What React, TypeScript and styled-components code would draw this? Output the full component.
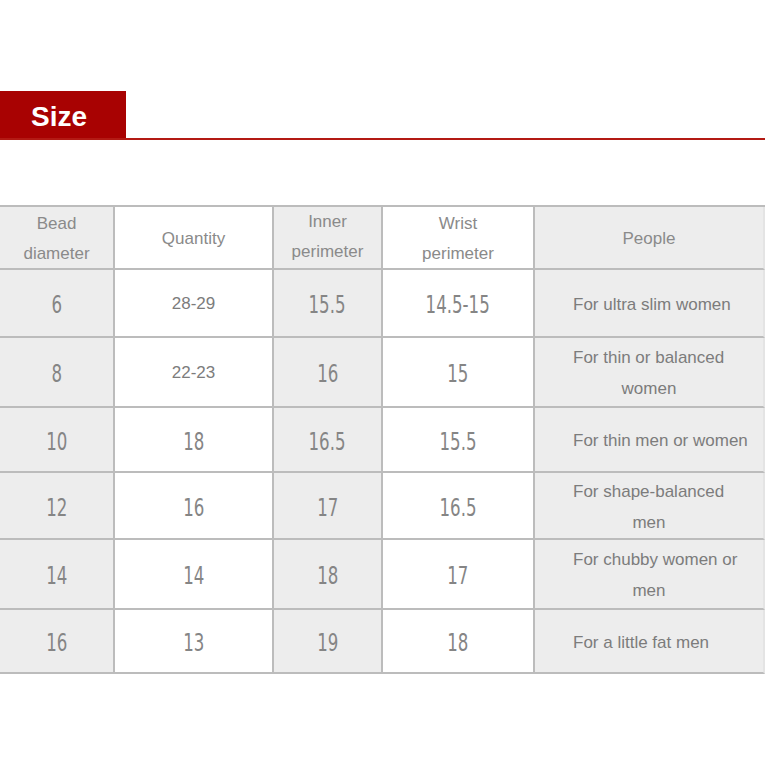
import React from "react";
import styled, { createGlobalStyle } from "styled-components";

const Global = createGlobalStyle`
  html, body { margin: 0; padding: 0; background: #ffffff; }
  body { font-family: "Liberation Sans", Arial, sans-serif; }
`;

const Page = styled.div`
  width: 765px;
  height: 765px;
  overflow: hidden;
  background: #fff;
  padding-top: 91px;
  box-sizing: border-box;
`;

const TitleBar = styled.div`
  display: flex;
  align-items: stretch;
  height: 47px;
  border-bottom: 2px solid #b31a14;
`;

const TitleTab = styled.div`
  width: 126px;
  background: #a80202;
  color: #fff;
  font-family: "Liberation Sans", Arial, sans-serif;
  font-weight: 700;
  font-size: 28px;
  display: flex;
  align-items: center;
  padding-left: 31px;
  box-sizing: border-box;
  padding-top: 5px;
`;

const Table = styled.div`
  margin-top: 65px;
  display: grid;
  grid-template-columns: 115px 159px 109px 152px 230px;
  border-top: 2px solid #bcbcbc;
`;

const Cell = styled.div<{ $gray: boolean; $h: number; $last?: boolean }>`
  height: ${(p) => p.$h}px;
  box-sizing: border-box;
  padding-top: 2px;
  background: ${(p) => (p.$gray ? "#ededed" : "#ffffff")};
  border-bottom: 2px solid #bcbcbc;
  border-right: ${(p) => (p.$last ? "2px solid #e4e4e4" : "2px solid #bcbcbc")};
  display: flex;
  flex-direction: column;
  align-items: center;
  justify-content: center;
  text-align: center;
`;

const HeadText = styled.div<{ $shift?: number }>`
  font-family: "Liberation Sans", Arial, sans-serif;
  font-size: 17px;
  line-height: 30px;
  color: #8a8a8a;
  margin-top: ${(p) => p.$shift ?? 0}px;
`;

const Num = styled.div`
  font-family: "DejaVu Sans Condensed", "DejaVu Sans", sans-serif;
  font-weight: 300;
  font-size: 24px;
  color: #858585;
  transform: translateY(1px) scaleX(0.77);
`;

const Plain = styled.div`
  font-family: "Liberation Sans", Arial, sans-serif;
  font-size: 17px;
  color: #7c7c7c;
`;

const People = styled.div`
  align-self: stretch;
  font-family: "Liberation Sans", Arial, sans-serif;
  font-size: 17px;
  line-height: 31px;
  color: #7c7c7c;
  display: flex;
  flex-direction: column;
  padding-left: 38px;
`;

const PeopleLine = styled.div<{ $center?: boolean }>`
  text-align: ${(p) => (p.$center ? "center" : "left")};
  margin-left: ${(p) => (p.$center ? "-38px" : "0")};
  white-space: nowrap;
`;

type Row = {
  h: number;
  bead: string;
  qty: string;
  qtyPlain?: boolean;
  inner: string;
  wrist: string;
  people: string[];
};

const rows: Row[] = [
  { h: 68, bead: "6", qty: "28-29", qtyPlain: true, inner: "15.5", wrist: "14.5-15", people: ["For ultra slim women"] },
  { h: 70, bead: "8", qty: "22-23", qtyPlain: true, inner: "16", wrist: "15", people: ["For thin or balanced", "women"] },
  { h: 65, bead: "10", qty: "18", inner: "16.5", wrist: "15.5", people: ["For thin men or women"] },
  { h: 67, bead: "12", qty: "16", inner: "17", wrist: "16.5", people: ["For shape-balanced", "men"] },
  { h: 70, bead: "14", qty: "14", inner: "18", wrist: "17", people: ["For chubby women or", "men"] },
  { h: 64, bead: "16", qty: "13", inner: "19", wrist: "18", people: ["For a little fat men"] },
];

export default function App() {
  return (
    <Page>
      <Global />
      <TitleBar>
        <TitleTab>Size</TitleTab>
      </TitleBar>
      <Table>
        <Cell $gray $h={63}>
          <HeadText>Bead</HeadText>
          <HeadText>diameter</HeadText>
        </Cell>
        <Cell $gray={false} $h={63}>
          <HeadText>Quantity</HeadText>
        </Cell>
        <Cell $gray $h={63}>
          <HeadText $shift={-3}>Inner</HeadText>
          <HeadText>perimeter</HeadText>
        </Cell>
        <Cell $gray={false} $h={63}>
          <HeadText>Wrist</HeadText>
          <HeadText>perimeter</HeadText>
        </Cell>
        <Cell $gray $h={63} $last>
          <HeadText>People</HeadText>
        </Cell>
        {rows.map((r) => (
          <React.Fragment key={r.bead}>
            <Cell $gray $h={r.h}>
              <Num>{r.bead}</Num>
            </Cell>
            <Cell $gray={false} $h={r.h}>
              {r.qtyPlain ? <Plain>{r.qty}</Plain> : <Num>{r.qty}</Num>}
            </Cell>
            <Cell $gray $h={r.h}>
              <Num>{r.inner}</Num>
            </Cell>
            <Cell $gray={false} $h={r.h}>
              <Num>{r.wrist}</Num>
            </Cell>
            <Cell $gray $h={r.h} $last>
              <People>
                {r.people.map((l, i) => (
                  <PeopleLine key={i} $center={i > 0}>
                    {l}
                  </PeopleLine>
                ))}
              </People>
            </Cell>
          </React.Fragment>
        ))}
      </Table>
    </Page>
  );
}
